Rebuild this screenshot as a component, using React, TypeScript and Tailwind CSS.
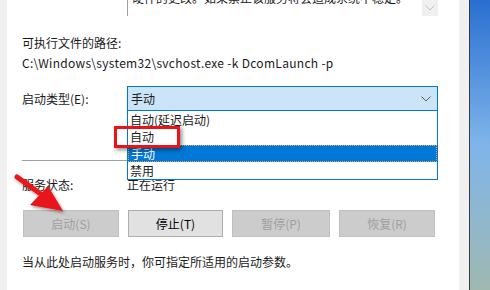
import React from 'react';

const font = { fontFamily: '"Noto Sans CJK SC", "Microsoft YaHei", sans-serif' };

const Chevron = ({ color = '#606060' }: { color?: string }) => (
  <svg width="10" height="6" viewBox="0 0 10 6">
    <path d="M0.5 0.5 L5 5 L9.5 0.5" fill="none" stroke={color} strokeWidth="1" />
  </svg>
);

const Btn = ({ label, enabled = false }: { label: string; enabled?: boolean }) => (
  <div
    className={
      enabled
        ? 'h-[27px] flex items-center justify-center border border-[#adadad] bg-[#e1e1e1] text-black'
        : 'h-[27px] flex items-center justify-center border border-[#bfbfbf] bg-[#cccccc] text-[#a0a0a0]'
    }
  >
    {label}
  </div>
);

export default function App() {
  return (
    <div className="w-[490px] h-[290px] flex overflow-hidden text-[12px] text-[#1a1a1a] bg-white" style={font}>
      <div className="w-[7px] bg-[#f0f0f0] shrink-0" />
      <div className="w-[452px] shrink-0 bg-white pl-[15px] flex flex-col relative">
        {/* description box (scrolled, only bottom visible) */}
        <div className="ml-[105px] w-[311px] h-[16px] border-l border-[#a0a0a0] flex overflow-hidden relative">
          <div className="flex-1 overflow-hidden relative">
            <div className="absolute left-[4px] top-[-10px] whitespace-nowrap leading-[16px]">硬件的更改。如果禁止该服务将会造成系统不稳定。</div>
          </div>
          <div className="w-[16px] h-[16px] bg-[#f0f0f0] flex items-center justify-center">
            <Chevron color="#c0c0c0" />
          </div>
        </div>

        <div className="h-[18px] mt-[18px] flex items-center">可执行文件的路径:</div>
        <div className="h-[18px] mt-[2px] flex items-center tracking-[0.3px]">C:\Windows\system32\svchost.exe -k DcomLaunch -p</div>

        <div className="flex items-center mt-[14px] h-[25px]">
          <div className="w-[105px]">启动类型(E):</div>
          <div className="w-[311px] h-[25px] border border-[#0078d7] bg-[#cce4f7] flex items-center justify-between pl-[3px] pr-[6px] relative">
            <span>手动</span>
            <Chevron />
            {/* open list */}
            <div className="absolute left-[-1px] top-[24px] w-[311px] border border-t-0 border-[#0078d7] bg-white z-10 flex flex-col">
              <div className="h-[17px] flex items-center pl-[2px]">自动(延迟启动)</div>
              <div className="h-[17px] flex items-center pl-[2px]">自动</div>
              <div className="h-[17px] flex items-center pl-[2px] bg-[#0078d7] text-white border border-dotted border-[#f0a040]">手动</div>
              <div className="h-[17px] flex items-center pl-[2px]">禁用</div>
            </div>
            {/* red highlight box */}
            <div className="absolute left-[-14px] top-[39px] w-[66px] h-[22px] border-[3px] border-[#e8141a] z-20 shadow-[2px_2px_4px_rgba(0,0,0,0.45)]" />
          </div>
        </div>

        <div className="mt-[49px] w-[105px] h-px bg-[#a0a0a0]" />

        <div className="flex items-center mt-[15px] h-[18px]">
          <div className="w-[105px]">服务状态:</div>
          <div>正在运行</div>
        </div>

        <div className="grid grid-cols-[96px_95px_98px_96px] gap-x-[9px] w-[416px] mt-[16px] pl-[1px]">
          <Btn label="启动(S)" />
          <Btn label="停止(T)" enabled />
          <Btn label="暂停(P)" />
          <Btn label="恢复(R)" />
        </div>

        <div className="h-[18px] mt-[16px] flex items-center">当从此处启动服务时，你可指定所适用的启动参数。</div>

        {/* red arrow */}
        <svg className="absolute left-0 top-[170px] z-30" width="70" height="50" viewBox="0 0 70 50">
          <defs>
            <filter id="sh" x="-20%" y="-20%" width="150%" height="150%">
              <feDropShadow dx="1.5" dy="2" stdDeviation="1.5" floodColor="#000" floodOpacity="0.4" />
            </filter>
          </defs>
          <g filter="url(#sh)">
            <line x1="10" y1="7" x2="38" y2="27" stroke="#e8141a" strokeWidth="5" strokeLinecap="round" />
            <polygon points="56,41 23,35 41,16" fill="#e8141a" />
          </g>
        </svg>
      </div>
      <div className="w-[10px] bg-[#f0f0f0] shrink-0" />
      <div className="w-px bg-[#3a3a3a] shrink-0" />
      <div className="flex-1 bg-gradient-to-b from-[#2a6fd0] via-[#7fb5ea] to-[#9fb8b0]" />
    </div>
  );
}
